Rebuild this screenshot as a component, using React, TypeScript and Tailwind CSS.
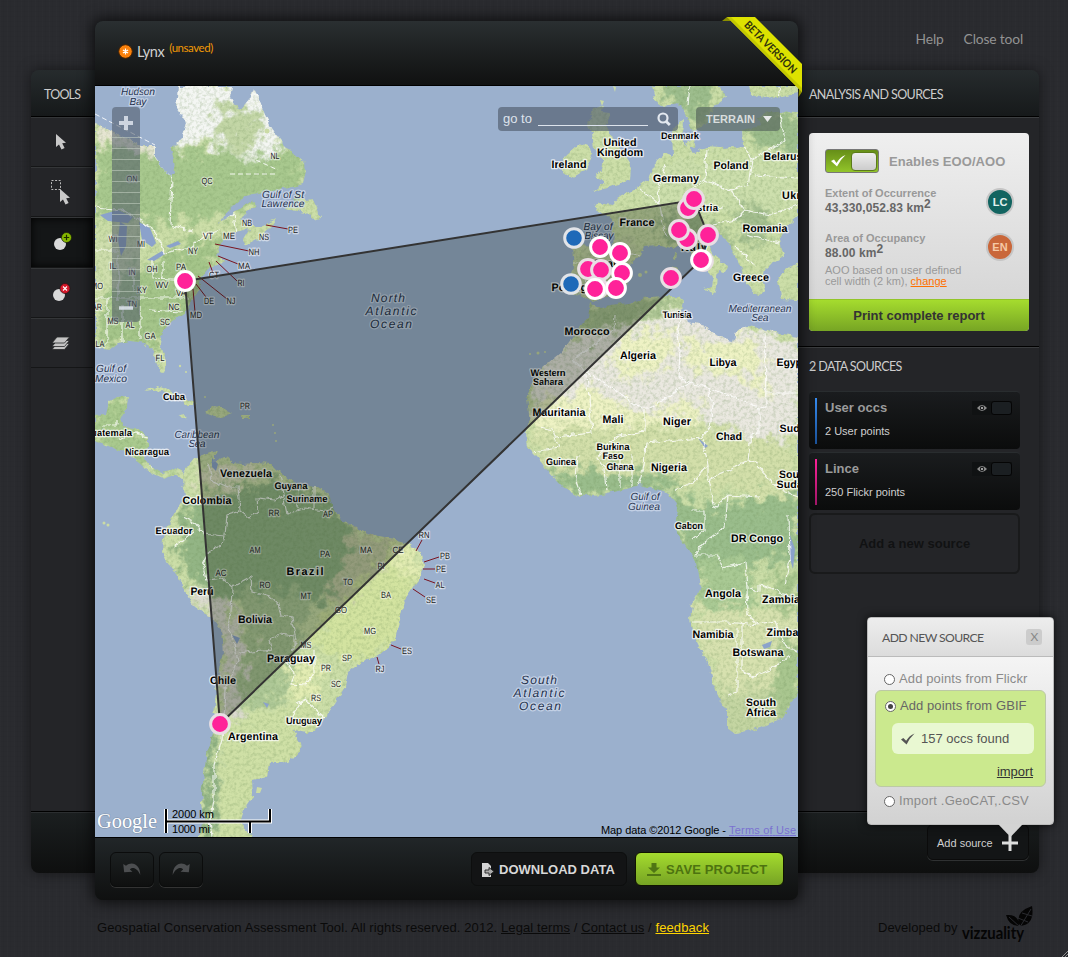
import React from "react";

const SANS = "font-['Liberation_Sans',Arial,sans-serif]";
const GEO = "font-['Lato',sans-serif]";

const LAND = [
  // North America
  "M95,123 L112,132 130,140 142,146 155,146 155,158 165,171 171,177 175,173 174,160 171,149 180,140 187,124 176,108 178,86 L232,86 230,97 240,111 250,99 254,88 258,97 263,110 270,125 280,140 292,152 305,163 306,172 303,184 290,188 270,191 252,194 240,199 230,208 220,222 230,215 240,209 253,200 257,206 250,210 241,218 246,226 252,226 262,226 275,219 270,229 257,240 246,246 243,239 249,229 240,232 229,236 221,243 217,255 224,262 208,269 201,277 199,290 191,302 184,314 173,320 163,331 160,343 167,363 165,374 159,371 153,352 145,343 130,341 118,343 109,350 95,347Z",
  "M285,209 L294,199 301,192 306,201 313,200 322,218 313,220 306,213Z",
  // Central America
  "M95,416 L106,415 109,401 118,397 128,396 127,407 121,420 122,427 135,428 148,436 148,446 143,457 152,468 163,472 175,467 183,473 195,458 207,454 217,451 212,462 227,456 232,463 243,464 255,463 272,464 283,475 295,483 315,487 328,493 333,507 342,522 362,530 378,537 395,540 408,544 422,553 424,567 420,577 413,587 404,600 400,620 395,638 386,651 374,657 362,662 348,672 345,687 335,703 325,718 314,732 306,733 293,730 300,743 301,749 292,759 283,763 270,763 268,777 252,780 253,797 244,810 240,823 250,832 251,838 L198,838 204,820 201,793 204,773 207,753 213,733 215,703 218,673 223,653 221,630 212,618 195,608 188,597 178,577 167,561 162,552 163,540 167,527 175,513 185,497 183,480 175,474 165,479 150,472 135,460 125,452 112,447 95,441Z",
  // Caribbean
  "M143,392 L158,386 167,389 178,396 192,401 197,405 185,405 178,398 162,390Z",
  "M205,413 L212,406 222,407 232,413 222,417 213,416Z",
  "M241,415 h9 v3 h-9Z",
  "M178,416 l7,-1 4,3 -8,1Z",
  // British isles
  "M587,123 L594,108 603,106 601,112 611,113 606,125 612,136 622,152 632,167 631,180 618,184 604,188 592,192 603,183 595,177 602,169 604,160 594,149 592,133Z",
  "M564,157 L579,143 590,147 592,157 587,169 572,178 563,172Z",
  // Iberia, France, central Europe
  "M572,250 L580,244 596,245 613,248 614,233 611,220 602,213 594,209 598,203 613,205 620,197 637,187 648,179 657,161 665,154 673,157 672,133 680,121 684,119 683,143 693,152 707,147 720,148 736,147 743,146 742,130 752,128 760,126 758,117 768,111 798,112 L798,217 787,226 780,240 784,257 772,263 762,273 766,291 757,295 748,284 738,262 727,240 713,227 706,231 709,244 713,255 728,267 725,273 718,270 716,287 711,287 713,277 701,263 692,255 683,241 672,248 660,245 644,246 641,255 630,264 632,277 622,291 603,298 592,302 575,293 569,289 574,266Z",
  "M704,289 l12,-3 -2,9Z M672,266 l6,2 -1,10 -5,-1Z M674,252 l3,1 -1,8 -3,-2Z",
  // Scandinavia
  "M652,86 L655,101 664,107 676,102 683,109 692,132 701,127 707,123 713,107 727,97 720,86Z M750,86 L752,94 768,99 798,93 798,86Z M685,143 l9,-4 1,7 -6,3Z",
  // Turkey
  "M778,280 L784,270 798,262 798,300 782,299Z",
  // Africa
  "M588,317 L590,303 600,308 617,305 633,302 650,297 667,296 680,296 684,302 682,310 687,322 700,324 712,331 724,339 733,341 737,329 747,326 760,328 775,332 798,337 L798,690 783,718 760,727 748,731 735,733 727,727 727,710 715,690 707,663 697,643 690,620 692,603 701,587 697,563 683,543 675,527 678,510 674,500 668,492 654,489 640,485 623,490 607,493 580,497 563,487 547,470 537,457 527,447 525,433 530,423 527,397 533,380 543,367 560,353 572,337Z",
].join(" ");

const BORDERS = [
  "M155,143 L155,158 172,178 M172,178 L170,225 193,231 M95,207 L113,209 120,208 152,228 165,253 190,247 205,235 220,230 M226,216 l8,-2 3,20 M303,178",
  "M95,298 H190 M150,310 L182,312 M107,298 V345 M122,305 V342 M140,307 V340 M152,260 V278 L190,280 M133,270 V290 M118,255 V300 M95,250 H118 M163,262 V278",
  "M208,462 L212,480 228,487 240,487 M238,487 L240,510 250,518 258,512 257,498 275,500 283,495 287,514 305,508 325,511 333,507 M280,475 L284,494 M298,484 L297,509 M314,487 L314,509 M182,517 L195,523 204,534 224,536 222,545 209,551 203,563 207,580 222,578 M225,535 L227,515 240,511 M175,545 L183,541 195,531",
  "M222,578 L232,587 251,577 252,592 270,597 278,604 281,616 292,618 297,640 292,651 M232,587 L231,612 228,625 233,640 M233,640 L238,660 225,690 222,740 214,765 214,800 210,820 212,837 M252,652 L272,650 269,640 280,634 294,636 294,648 M240,653 L252,651 M286,662 L295,674 291,684 306,685 314,672 314,651 M295,704 L305,699 325,718 M302,700 L291,720 M150,465 L153,470",
  "M103,425 h14 v-5 M117,440 L135,433 148,437",
  "M615,315 L614,330 573,360 M573,360 L590,374 641,408 M587,374 L592,433 555,437 553,430 540,427 M641,408 L650,408 690,383 679,377 680,347 677,330 682,320 M690,383 L710,388 759,408 M765,332 L766,407 759,408 759,433 751,435 748,460 758,463 M766,393 H798 M708,388 L713,405 710,427 702,438 646,443 644,465 638,487 M645,410 L645,432 618,436 606,445 598,458 605,468 607,490 M555,438 L559,448 532,452 M578,455 L576,480 580,495 M703,440 L708,465 693,482 675,490 M708,465 L708,480 714,508 M620,460 V487 M632,455 V487 M748,460 L730,470 708,480 M758,466 L780,490 798,497 M714,508 L728,495 760,497",
  "M728,495 L725,527 707,540 694,555 M690,510 h14 l0,20 -12,10 M694,555 H717 L723,568 745,562 747,588 759,592 759,584 775,590 790,596 M747,588 L748,615 758,624 M692,622 H727 L758,625 775,622 M737,627 V692 L727,695 M742,625 V670 L752,677 770,670 790,656 M775,622 L785,645 798,652 M789,515 L790,560 785,585",
  "M572,262 L590,262 585,290 M613,248 L640,255 M640,188 L660,205 662,220 M665,165 L658,190 660,205 M660,220 L668,236 M707,150 L705,180 690,190 700,205 723,208 M705,180 L730,190 748,185 752,160 743,147 M752,160 L785,140 780,115 M730,190 L745,210 770,215 798,205 M745,210 L735,220 713,225 M745,235 L780,243 M735,245 L755,265 M755,175 L798,178 M690,86 L688,104 M778,86 L782,112",
].join(" ");

type Lab = [string, number, number, number, ("b" | "s" | "w")?, number?];
// text, centre x, baseline y, width, kind (b country, s state, w water), size
const LABELS: Lab[] = [
  ["Hudson", 138, 95, 34, "w"], ["Bay", 138, 105, 17, "w"],
  ["Gulf of St", 283, 198, 42, "w"], ["Lawrence", 283, 207, 43, "w"],
  ["Gulf of", 111, 372, 30, "w"], ["Mexico", 111, 382, 32, "w"],
  ["Caribbean", 197, 438, 45, "w"], ["Sea", 197, 447, 17, "w"],
  ["Bay of", 598, 230, 29, "w"], ["Biscay", 599, 239, 29, "w"],
  ["Mediterranean", 760, 312, 63, "w"], ["Sea", 760, 321, 17, "w"],
  ["Gulf of", 645, 500, 29, "w"], ["Guinea", 644, 510, 32, "w"],
  ["North", 388, 302, 34, "w", 12], ["Atlantic", 391, 315, 51, "w", 12], ["Ocean", 391, 328, 42, "w", 12],
  ["South", 539, 684, 36, "w", 12], ["Atlantic", 539, 697, 51, "w", 12], ["Ocean", 540, 710, 42, "w", 12],
  ["ON", 132, 182, 11, "s"], ["QC", 207, 184, 11, "s"], ["NL", 275, 159, 9, "s"],
  ["NB", 247, 226, 10, "s"], ["PE", 293, 233, 10, "s"], ["NS", 264, 240, 10, "s"],
  ["VT", 208, 239, 10, "s"], ["ME", 229, 239, 12, "s"], ["NH", 254, 255, 11, "s"],
  ["NY", 193, 254, 10, "s"], ["MA", 244, 269, 12, "s"], ["WI", 113, 242, 9, "s"],
  ["MI", 141, 247, 8, "s"], ["CT", 214, 278, 10, "s"], ["RI", 241, 286, 7, "s"],
  ["PA", 181, 270, 10, "s"], ["OH", 152, 272, 11, "s"], ["IL", 113, 269, 7, "s"],
  ["IN", 132, 275, 7, "s"], ["MO", 97, 289, 12, "s"], ["WV", 162, 288, 13, "s"],
  ["VA", 181, 296, 10, "s"], ["KY", 142, 293, 10, "s"], ["DE", 209, 304, 10, "s"],
  ["NJ", 231, 304, 9, "s"], ["NC", 174, 310, 11, "s"], ["TN", 132, 307, 10, "s"],
  ["MD", 196, 318, 12, "s"], ["AR", 97, 310, 10, "s"], ["SC", 165, 325, 10, "s"],
  ["MS", 113, 324, 11, "s"], ["AL", 130, 328, 9, "s"], ["GA", 150, 339, 11, "s"],
  ["LA", 100, 347, 9, "s"], ["FL", 160, 361, 9, "s"], ["PR", 245, 409, 10, "s"],
  ["RR", 274, 516, 11, "s"], ["AP", 328, 517, 10, "s"], ["AM", 255, 553, 11, "s"],
  ["PA", 325, 557, 10, "s"], ["MA", 366, 553, 12, "s"], ["CE", 398, 553, 11, "s"],
  ["PI", 381, 569, 7, "s"], ["RN", 424, 538, 11, "s"], ["PB", 445, 559, 10, "s"],
  ["PE", 441, 572, 10, "s"], ["AL", 440, 588, 9, "s"], ["SE", 431, 603, 10, "s"],
  ["AC", 221, 576, 11, "s"], ["RO", 265, 588, 11, "s"], ["TO", 348, 585, 10, "s"],
  ["MT", 306, 599, 11, "s"], ["BA", 386, 598, 10, "s"], ["GO", 341, 613, 12, "s"],
  ["MG", 370, 634, 12, "s"], ["MS", 306, 648, 11, "s"], ["ES", 407, 654, 10, "s"],
  ["SP", 347, 661, 10, "s"], ["RJ", 380, 672, 9, "s"], ["PR", 326, 671, 10, "s"],
  ["SC", 336, 687, 10, "s"], ["RS", 316, 701, 10, "s"],
  ["Ireland", 569, 168, 35], ["United", 620, 146, 33], ["Kingdom", 620, 156, 46],
  ["Denmark", 680, 139, 38, "b", 9.5], ["Germany", 676, 182, 46], ["Poland", 731, 169, 35],
  ["Belarus", 783, 160, 39], ["Ukraine", 803, 199, 42], ["Austria", 701, 211, 34, "b", 9.5],
  ["France", 637, 226, 35], ["Romania", 765, 232, 45], ["Italy", 694, 251, 26],
  ["Spain", 608, 267, 30], ["Portugal", 574, 291, 45], ["Greece", 751, 281, 36],
  ["Tunisia", 677, 318, 29, "b", 9.5], ["Morocco", 587, 335, 45], ["Algeria", 638, 359, 36],
  ["Libya", 723, 366, 27], ["Egypt", 791, 366, 29], ["Western", 548, 376, 35, "b", 9.5],
  ["Sahara", 548, 385, 30, "b", 9.5], ["Mauritania", 559, 416, 53], ["Mali", 613, 423, 21],
  ["Niger", 677, 425, 28], ["Chad", 729, 440, 26], ["Sudan", 796, 432, 33],
  ["Burkina", 613, 450, 33, "b", 9.5], ["Faso", 613, 459, 21, "b", 9.5],
  ["Ghana", 620, 470, 27, "b", 9.5], ["Guinea", 561, 465, 30, "b", 9.5],
  ["Nigeria", 669, 471, 36], ["South", 794, 478, 30], ["Sudan", 793, 488, 33],
  ["Gabon", 689, 529, 28, "b", 9.5], ["DR Congo", 757, 542, 52], ["Angola", 723, 597, 36],
  ["Zambia", 781, 603, 38], ["Namibia", 713, 638, 41], ["Zimbabwe", 793, 636, 53],
  ["Botswana", 758, 656, 51], ["South", 761, 706, 30], ["Africa", 761, 716, 30],
  ["Cuba", 174, 400, 22, "b", 9.5], ["Guatemala", 108, 436, 48, "b", 9.5],
  ["Nicaragua", 147, 455, 44, "b", 9.5], ["Venezuela", 246, 477, 52],
  ["Guyana", 291, 489, 33, "b", 9.5], ["Suriname", 307, 502, 41, "b", 9.5],
  ["Colombia", 207, 504, 49], ["Ecuador", 174, 534, 37, "b", 9.5], ["Brazil", 305, 575, 37],
  ["Perú", 202, 595, 23], ["Bolivia", 255, 623, 34], ["Paraguay", 291, 662, 48],
  ["Chile", 223, 684, 26], ["Uruguay", 304, 724, 36, "b", 9.5], ["Argentina", 253, 740, 50],
];

const LEADS = [
  [266, 225, 288, 229], [215, 244, 249, 251], [218, 256, 238, 264], [209, 262, 213, 273], [216, 261, 237, 281],
  [198, 276, 227, 299], [196, 284, 206, 297], [193, 289, 195, 312], [422, 540, 416, 551], [424, 562, 439, 557],
  [423, 569, 435, 569], [424, 579, 435, 583], [413, 589, 425, 597], [391, 645, 401, 649], [377, 657, 379, 664],
];

const PINK = [
  [693, 200, 0], [688, 208, 1], [694, 199, 1], [687, 239, 1], [679, 230, 1], [708, 235, 1], [703, 261, 1], [701, 260, 2],
  [671, 278, 1], [600, 247, 2], [620, 253, 2], [588, 269, 1], [622, 273, 2], [601, 270, 1], [598, 288, 1], [595, 289, 2],
  [616, 288, 2], [185, 281, 2], [220, 724, 1],
];

function WorldMap() {
  return (
    <svg className="block h-[751px] w-[703px]" viewBox="95 86 703 751">
      <defs>
        <filter id="coast" x="-5%" y="-5%" width="110%" height="110%">
          <feTurbulence type="fractalNoise" baseFrequency="0.14" numOctaves="3" seed="4" />
          <feDisplacementMap in="SourceGraphic" scale="6" xChannelSelector="R" yChannelSelector="G" />
        </filter>
        <filter id="patch" x="-20%" y="-20%" width="140%" height="140%" colorInterpolationFilters="sRGB">
          <feGaussianBlur stdDeviation="3" result="b" />
          <feTurbulence type="fractalNoise" baseFrequency="0.09" numOctaves="4" seed="9" result="n" />
          <feDisplacementMap in="b" in2="n" scale="38" xChannelSelector="R" yChannelSelector="G" />
        </filter>
        <filter id="grain" x="0" y="0" width="100%" height="100%" colorInterpolationFilters="sRGB">
          <feTurbulence type="fractalNoise" baseFrequency="0.3" numOctaves="4" seed="2" />
          <feColorMatrix values="0 0 0 0 0.42  0 0 0 0 0.55  0 0 0 0 0.34  1.6 0 0 0 -0.66" />
        </filter>
        <mask id="landMask" maskUnits="userSpaceOnUse" x="95" y="86" width="703" height="751">
          <path d={LAND} fill="#fff" filter="url(#coast)" />
        </mask>
      </defs>
      <rect x="95" y="86" width="703" height="751" fill="#9bb0cd" />
      <g mask="url(#landMask)">
        <rect x="95" y="86" width="703" height="751" fill="#ccdea8" />
        <g filter="url(#patch)">
          <path fill="#a8c88e" d="M95,145 L150,150 300,150 305,195 230,215 160,225 95,215Z" />
          <path fill="#f4f6f3" d="M150,80 H262 L285,145 262,160 225,152 200,140 175,150Z" />
          <path fill="#c3d6a6" d="M216,105 L262,112 255,150 225,152Z" />
          <path fill="#e6e5d2" d="M95,118 L170,138 165,155 95,140Z" />
          <path fill="#cfdead" d="M95,232 H130 V290 H95Z" />
          <path fill="#a5c58a" d="M112,285 L190,240 225,240 185,320 160,350 95,345Z" />
          <path fill="#a9c98e" d="M95,400 H135 L150,440 185,475 95,450Z" />
          <path fill="#dfe0c2" d="M190,480 L218,462 262,466 230,490Z" />
          <path fill="#93b585" d="M190,500 L230,490 280,478 335,500 345,525 375,550 350,590 300,610 230,600 190,580 178,550Z" />
          <path fill="#adc796" d="M240,590 L310,590 300,640 285,700 235,710 250,640Z" />
          <path fill="#d3e3a0" d="M370,530 L425,550 405,640 350,665 310,640 340,590Z" />
          <path fill="#c6cca5" d="M350,530 L395,540 380,565 345,600 325,600 345,565Z" />
          <path fill="#e3ecb3" d="M395,548 h28 v28 h-30Z M290,660 h30 v40 h-30Z" />
          <path fill="#dcdad0" d="M185,590 L222,595 245,640 238,720 220,720 225,640Z" />
          <path fill="#cfe0a6" d="M225,720 L320,700 300,765 240,840 215,840Z" />
          <path fill="#8fb184" d="M203,730 L215,740 212,840 198,840Z" />
          <path fill="#9dbd8d" d="M655,80 H715 L705,125 690,120Z M725,110 L798,110 798,150 760,150Z" />
          <path fill="#cddfad" d="M640,160 H798 V210 H640Z" />
          <path fill="#a5bf90" d="M655,215 L700,212 735,245 740,275 720,240 665,240Z M735,200 L775,212 765,245 745,240Z" />
          <path fill="#c5d3a6" d="M575,245 H640 V300 H575Z" />
          <path fill="#a9c191" d="M590,305 L660,298 690,300 620,325 575,340Z" />
          <path fill="#eae8e0" d="M540,350 L625,325 680,310 800,340 800,440 760,440 690,420 600,415 530,420Z" />
          <path fill="#eef2c4" d="M615,345 L640,330 680,335 665,370 615,380Z M685,340 H760 V370 H690Z M530,410 L590,385 640,415 700,400 700,425 600,425 540,440Z M740,370 H765 V400Z" />
          <path fill="#d3dfaa" d="M525,430 L600,425 700,428 800,445 800,500 690,485 540,470Z" />
          <path fill="#9abd8c" d="M545,468 L600,470 680,475 660,495 580,498Z M670,490 L700,505 800,495 800,560 745,565 700,580 670,530Z" />
          <path fill="#a9c994" d="M700,560 L750,560 755,600 725,615 695,600Z" />
          <path fill="#d7e1af" d="M690,610 H800 V690 H720Z" />
          <path fill="#c4d5a2" d="M715,690 H800 V740 H720Z" />
          <path fill="#a9c68f" d="M780,640 H805 V710 H770Z M770,570 h30 v40 h-25Z" />
        </g>
        <rect x="95" y="86" width="703" height="751" filter="url(#grain)" opacity=".4" />
        <g fill="#8ba2cb">
          <path d="M100,215 L118,210 133,217 128,223 108,221Z M120,222 L127,226 126,246 121,256 118,240Z M139,222 L150,228 156,243 152,247 142,240Z M147,260 L162,251 165,254 154,261Z M166,246 l12,-5 3,3 -11,4Z" />
          <path d="M698,438 l10,8 -3,2Z M762,645 l10,-4 -2,6 -6,2Z M232,635 l8,3 -3,6Z M263,702 l6,2 -2,4Z M212,458 l6,6 -2,7 -4,-4Z M790,535 l5,14 -2,20 -3,-10Z" />
        </g>
        <path d={BORDERS} fill="none" stroke="#fff" strokeWidth="1.2" opacity=".8" filter="url(#coast)" />
      </g>
      <path d="M95,114 L155,145 M230,174 H278 M256,160 L278,170" stroke="#fff" strokeWidth="1" strokeDasharray="5 3" fill="none" opacity=".85" />
      <g fill="#cbdba5">
        <circle cx="180" cy="366" r="1.2" /><circle cx="186" cy="372" r="1" /><circle cx="205" cy="397" r="1" />
        <circle cx="273" cy="425" r="1" /><circle cx="275" cy="433" r="1" /><circle cx="276" cy="441" r="1" />
        <circle cx="267" cy="131" r="2.5" /><circle cx="104" cy="523" r="1.5" /><circle cx="108" cy="525" r="1.5" />
        <circle cx="545" cy="352" r="1" /><circle cx="538" cy="353" r="1.5" /><circle cx="530" cy="354" r="1" />
        <circle cx="640" cy="275" r="2" /><circle cx="646" cy="272" r="1.5" /><path d="M257,787 l5,1 -2,5 -4,0Z M613,86 l3,1 -1,5Z M600,100 l4,1 -2,5Z" />
      </g>
      <g stroke="#7a1420" strokeWidth="1">
        {LEADS.map((l, i) => <line key={i} x1={l[0]} y1={l[1]} x2={l[2]} y2={l[3]} />)}
      </g>
      <g className={SANS} textAnchor="middle" paintOrder="stroke" strokeLinejoin="round" textRendering="geometricPrecision">
        {LABELS.map(([t, x, y, w, k = "b", s], i) => (
          <text
            key={i}
            x={x}
            y={y}
            textLength={w}
            lengthAdjust={k === "s" ? "spacingAndGlyphs" : "spacing"}
            fontSize={s ?? (k === "s" ? 9 : k === "w" ? 10.3 : 10.8)}
            fontWeight={k === "b" ? 700 : 400}
            fontStyle={k === "w" ? "italic" : "normal"}
            fill={k === "b" ? "#000" : k === "s" ? "#222" : "#26324d"}
            stroke={k === "w" ? "#d5dff0" : "#fff"}
            strokeOpacity={k === "s" ? 0.5 : 0.7}
            strokeWidth={2.6}
          >
            {t}
          </text>
        ))}
      </g>
      <path d="M185,281 L694,200 708,235 701,260 220,724Z" fill="#101810" fillOpacity=".28" stroke="#333" strokeWidth="2" />
      {[[574, 238], [571, 284]].map(([x, y]) => (
        <circle key={y} cx={x} cy={y} r="9.3" fill="#1e69b8" stroke="#e2e4e8" strokeWidth="3" />
      ))}
      {PINK.map(([x, y, k], i) => (
        <circle key={i} cx={x} cy={y} r="9.4" fill="#ff2299" stroke={k === 2 ? "#fff" : "#e8dfe4"} strokeWidth="3" />
      ))}
      <text x="97" y="828" textLength="60" lengthAdjust="spacingAndGlyphs" fontSize="22" className="font-['Liberation_Serif',serif]" fill="#fff" stroke="#6f7f94" strokeWidth="1.2" strokeOpacity=".6" paintOrder="stroke">Google</text>
      <path d="M166,809 V833 M165,821.5 H270 V809 M250,821 V833" fill="none" stroke="#fff" strokeWidth="4" />
      <path d="M166,809 V833 M165,821.5 H270 V809 M250,821 V833" fill="none" stroke="#000" strokeWidth="2" />
      <g className={SANS} fontSize="11" fill="#000">
        <text x="172" y="818" textLength="42">2000 km</text>
        <text x="172" y="833" textLength="38">1000 mi</text>
        <text x="601" y="834" textLength="125">Map data ©2012 Google -</text>
        <text x="729" y="834" textLength="67" fill="#7a71d1" textDecoration="underline">Terms of Use</text>
      </g>
    </svg>
  );
}

function Cursor({ x = 0, y = 0 }: { x?: number; y?: number }) {
  return <path transform={`translate(${x} ${y})`} d="M0,0 L0,13 L3,10.4 L5.5,15.4 L8.6,14 L6.2,9.2 L10,8.8Z" fill="#c9c9c9" />;
}

const toolIcons = [
  <svg className="h-4 w-3" viewBox="0 0 12 16"><Cursor /></svg>,
  <svg className="h-[26px] w-[21px] -translate-x-[2px]" viewBox="0 0 21 26">
    <rect x="1.5" y="1.5" width="9" height="9" fill="none" stroke="#bbb" strokeDasharray="2 1.6" />
    <Cursor x={10} y={10} />
  </svg>,
  <svg className="h-5 w-[19px]" viewBox="0 0 19 20">
    <circle cx="7" cy="12" r="6" fill="#d9d9d9" />
    <circle cx="13.5" cy="5.5" r="5" fill="#86b800" stroke="#171b0b" strokeWidth=".7" />
    <path d="M13.500,2.800 v5.4 M10.800,5.500 h5.400" stroke="#1d2a00" strokeWidth="1.2" />
  </svg>,
  <svg className="h-5 w-[19px] -translate-x-px" viewBox="0 0 19 20">
    <circle cx="7" cy="12" r="6" fill="#d9d9d9" />
    <circle cx="13" cy="5.500" r="5" fill="#d5182a" stroke="#2a1214" strokeWidth=".7" />
    <path d="M11,3.500 l4,4 M15,3.500 l-4,4" stroke="#fff" strokeWidth="1.100" />
  </svg>,
  <svg className="h-[14px] w-[18px] -translate-x-px" viewBox="0 0 18 14">
    <g stroke="#27282a" strokeWidth=".8" fill="#c4c4c4">
      <path d="M0,13.500 L5,7.500 H17.500 L12.500,13.500Z" />
      <path d="M0,10.500 L5,4.500 H17.500 L12.500,10.500Z" />
      <path d="M0,7 L5,1 H17.500 L12.500,7Z" />
    </g>
  </svg>,
];

function SourceCard({ name, info, bar }: { name: string; info: string; bar: string }) {
  return (
    <div className="flex h-[58px] w-[211px] rounded border-t border-[#292d2f] bg-linear-to-b from-[#1a1c1e] to-[#0b0c0c] pt-[6px] pl-[6px]">
      <div className={`h-[46px] w-[2px] ${bar}`} />
      <div className="ml-2 flex-1 leading-[15px]">
        <div className="mt-[2px] text-[13px] font-bold text-[#9b9b9b]">{name}</div>
        <div className="mt-[9px] text-[11px] text-[#cfcfcf]">{info}</div>
      </div>
      <div className="mt-[3px] mr-2 flex h-[14px] w-10 items-center bg-[#101213]">
        <svg className="ml-[5px] h-[8px] w-[10px]" viewBox="0 0 10 8">
          <path d="M0,4 Q5,-2 10,4 Q5,10 0,4Z" fill="#8d8d8d" />
          <circle cx="5" cy="4" r="2.200" fill="#1b1c1d" />
          <circle cx="5" cy="4" r="1" fill="#ccc" />
        </svg>
        <div className="ml-[4px] h-[14px] w-[21px] rounded-[3px] border border-[#050505] bg-[#1b1f22]" />
      </div>
    </div>
  );
}

function Radio({ on }: { on?: boolean }) {
  return (
    <span className="flex size-[11px] items-center justify-center rounded-full border border-[#666] bg-white">
      {on && <span className="size-[5px] rounded-full bg-[#444]" />}
    </span>
  );
}

export default function App() {
  return (
    <div className={`relative flex h-[957px] w-[1068px] overflow-hidden bg-[#2a2b2f] bg-[repeating-linear-gradient(90deg,rgba(255,255,255,.008)_0_1px,transparent_1px_3px,rgba(0,0,0,.03)_3px_4px,transparent_4px_7px),repeating-linear-gradient(0deg,rgba(0,0,0,.025)_0_1px,transparent_1px_5px)] pl-[31px] ${SANS}`}>
      {/* Tools */}
      <aside className="mt-[70px] flex h-[803px] w-16 flex-col overflow-hidden rounded-l-lg bg-[#242528] shadow-[0_0_14px_rgba(0,0,0,.5)]">
        <div className={`flex h-[47px] items-center border-b border-black bg-linear-to-b from-[#262b2d] to-[#16191a] pt-[5px] pl-[13px] text-[12.5px] tracking-[-.8px] text-[#cdcdcd] ${GEO}`}>TOOLS</div>
        {toolIcons.map((icon, i) => (
          <div key={i} className={`flex h-[50.2px] w-[62px] items-center justify-center border-t border-b border-t-[#343638] border-b-[#151617] ${i === 2 ? "bg-[#141617] shadow-[inset_0_0_8px_#000]" : ""}`}>{icon}</div>
        ))}
        <div className="mt-auto h-[62px] border-t border-black bg-linear-to-b from-[#1b1f20] to-[#0e0f0f] shadow-[inset_0_1px_0_#2b2e30]" />
      </aside>

      {/* Map window */}
      <main className="relative z-10 mt-[21px] flex h-[879px] w-[703px] flex-col rounded-lg bg-[#131516] shadow-[0_0_14px_3px_rgba(0,0,0,.65)]">
        <header className="flex h-[65px] items-center rounded-t-lg border-b border-black bg-linear-to-b from-[#2a2f31] to-[#101111] pl-[23px]">
          <svg className="mt-[-4px] size-[15px]" viewBox="0 0 15 15">
            <circle cx="7.500" cy="7.500" r="6.800" fill="#f9810c" stroke="#4c2400" />
            <path d="M7.500,4.600 V10.400 M4.900,6 L10.100,9 M10.100,6 L4.900,9" stroke="#fff" strokeWidth="1.200" />
          </svg>
          <h1 className={`mt-[-3px] ml-[4px] text-[14.5px] tracking-[-.4px] text-[#d0d0d0] ${GEO}`}>Lynx</h1>
          <span className={`mt-[-10px] ml-[5px] text-[11.5px] tracking-[-.45px] text-[#f29a05] ${GEO}`}>(unsaved)</span>
        </header>
        <div className="relative h-[751px]">
          <WorldMap />
          <div className="absolute top-[21px] left-[17px] flex h-[215px] w-[28px] flex-col items-center rounded bg-[#4d5866]/55">
            <svg className="h-[215px] w-7" viewBox="0 0 28 215">
              <path d="M14,9 V23 M7,16 H21" stroke="#dfe5ee" strokeWidth="4" opacity=".85" />
              <path d="M7,201 H21" stroke="#dfe5ee" strokeWidth="3.500" opacity=".85" />
              <path d="M0,30.500h28M0,41.500h28M0,52.500h28M0,63.500h28M0,74.500h28M0,85.500h28M0,96.500h28M0,107.500h28M0,118.500h28M0,129.500h28M0,140.500h28M0,151.500h28M0,162.500h28M0,173.500h28M0,184.500h28" stroke="#c7d2c5" opacity=".55" />
            </svg>
          </div>
          <div className="absolute top-[21px] left-[403px] flex h-[24px] w-[180px] items-center rounded bg-[#505c6b]/65 pl-[5px] text-[13px] text-[#dde3ec]">
            go to
            <span className="mt-[13px] ml-[6px] h-px w-[110px] bg-[#dde3ec]" />
            <svg className="ml-[9px] size-[14px]" viewBox="0 0 14 14" fill="none" stroke="#e3e8ef" strokeWidth="2.200">
              <circle cx="6" cy="6" r="4.500" /><path d="M9,9.200 L12.800,13" strokeWidth="2.800" />
            </svg>
          </div>
          <div className="absolute top-[21px] left-[601px] flex h-[24px] w-[84px] items-center rounded bg-[#5b6b60]/70 pl-[10px] text-[11px] font-bold text-[#d8dddd]">
            TERRAIN
            <svg className="ml-[8px] h-[6px] w-[9px]" viewBox="0 0 9 6"><path d="M0,0 H9 L4.500,6Z" fill="#e6e9e9" /></svg>
          </div>
        </div>
        <footer className="flex h-[63px] items-center rounded-b-lg border-t border-black bg-linear-to-b from-[#212628] to-[#0f1010] pr-[14px] pl-[15px]">
          {[0, 1].map((i) => (
            <button key={i} className="mr-[5px] flex h-[35px] w-[44px] items-center justify-center rounded-md border border-[#0b0c0c] bg-linear-to-b from-[#1c2021] to-[#0f1010] shadow-[0_1px_0_#333]">
              <svg className={`h-[12px] w-[18px] ${i ? "-scale-x-100" : ""}`} viewBox="0 0 19 13">
                <path d="M0,1 L1,10 L10,9.500 L7.200,7 C10,4 15,5 18.500,13 C18.500,1 9,-2.500 3,3Z" fill="#4c4e50" />
              </svg>
            </button>
          ))}
          <button className="ml-auto flex h-[34px] w-[156px] items-center rounded-md border border-[#0d0e0e] bg-[#131415] pt-px pl-[10px] text-[13px] font-bold text-[#d8d8d8]">
            <svg className="mr-[5px] h-[14px] w-[12px]" viewBox="0 0 12 14">
              <path d="M0,0 H6 L9,3 V14 H0Z" fill="#d4d4d4" /><path d="M3,7 H7 V4.500 L12,8.500 7,12.500 V10 H3Z" fill="#aaa" stroke="#222" strokeWidth=".9" />
            </svg>
            <span className="whitespace-nowrap">DOWNLOAD DATA</span>
          </button>
          <button className="ml-2 flex h-[34px] w-[149px] items-center rounded-md border border-[#101400] bg-linear-to-b from-[#a5dc2e] to-[#76a324] pt-px pl-[11px] text-[13px] font-bold tracking-[.15px] text-[#4d7310]">
            <svg className="mr-[5px] h-[13px] w-[14px]" viewBox="0 0 14 13"><path d="M4.500,0 h5 v4.500 h3.500 L7,10 1,4.500 h3.500Z M0,11 h14 v2 H0Z" fill="#4f7614" /></svg>
            SAVE PROJECT
          </button>
        </footer>
        <svg className="absolute top-[-4px] left-[627px] h-[82px] w-[80px]" viewBox="722 17 80 82">
          <path d="M722,21 L727,17 731,21Z M799,89 L802,92 798.500,97Z" fill="#8b8e00" />
          <path d="M727,17 H755 L802,64 V92Z" fill="#dde200" />
          <path d="M727,17 L802,92 V88 L731,17Z" fill="#c3c800" />
          <text transform="translate(743.500 25.500) rotate(45)" textLength="69" lengthAdjust="spacingAndGlyphs" fontSize="11" fontWeight="700" className={GEO} fill="#30320c">BETA VERSION</text>
        </svg>
      </main>

      {/* Analysis */}
      <div className="flex w-[241px] flex-col">
        <nav className={`flex h-[70px] justify-end gap-[20px] pt-[31px] pr-4 text-[13.8px] leading-4 tracking-[-.15px] text-[#939393] ${GEO}`}>
          <a>Help</a><a>Close tool</a>
        </nav>
        <aside className="flex h-[803px] flex-col overflow-hidden rounded-r-lg bg-[#242528] shadow-[0_0_14px_rgba(0,0,0,.5)]">
          <div className={`flex h-[47px] items-center bg-linear-to-b from-[#262b2d] to-[#16191a] pt-[3px] pl-[11px] text-[12.5px] tracking-[-.6px] text-[#cdcdcd] shadow-[inset_0_-1px_0_#000,0_1px_0_#3c3e40] ${GEO}`}>ANALYSIS AND SOURCES</div>
          <section className="mt-4 ml-[11px] flex h-[198px] w-[220px] flex-col overflow-hidden rounded bg-linear-to-b from-[#efefef] to-[#d2d2d2]">
            <div className="mt-4 ml-4 flex h-[24px] items-center">
              <div className="flex h-6 w-[54px] items-center rounded-[3px] border border-[#777] bg-linear-to-b from-[#668e18] to-[#93c52a]">
                <svg className="ml-[5px] h-[12px] w-[15px]" viewBox="0 0 15 12"><path d="M0,6 L3,4.500 5.500,8 Q9,2 14.500,0 Q9,5 6,11.500Z" fill="#fff" /></svg>
                <div className="ml-[5px] h-[19px] w-[26px] rounded-sm border border-[#5b7a1a] bg-linear-to-b from-[#eee] to-[#ccc]" />
              </div>
              <span className="mt-[2px] ml-[10px] text-[13px] font-bold tracking-[.05px] text-[#999]">Enables EOO/AOO</span>
            </div>
            <div className="mt-[12px] mr-[15px] ml-4 flex h-[36px] justify-between">
              <div>
                <div className="text-[11px] leading-4 font-bold text-[#999]">Extent of Occurrence</div>
                <div className="text-[12px] leading-[15px] font-bold tracking-[.1px] text-[#666]">43,330,052.83 km<span className="relative top-[-4px]">2</span></div>
              </div>
              <div className="mt-[3px] flex size-[28px] items-center justify-center rounded-full border-2 border-[#c5c5c5] bg-[#126460] text-[11px] font-bold text-[#e3f1ef]">LC</div>
            </div>
            <div className="mt-[9px] mr-[15px] ml-4 flex h-[35px] justify-between">
              <div>
                <div className="text-[11px] leading-4 font-bold text-[#999]">Area of Occupancy</div>
                <div className="text-[12px] leading-[15px] font-bold tracking-[.1px] text-[#666]">88.00 km<span className="relative top-[-4px]">2</span></div>
              </div>
              <div className="mt-[3px] flex size-[28px] items-center justify-center rounded-full border-2 border-[#c5c5c5] bg-[#c9673a] text-[11px] font-bold text-[#f6c9a6]">EN</div>
            </div>
            <div className="ml-4 text-[11px] leading-[11px] text-[#999]">AOO based on user defined<br />cell width (2 km), <a className="text-[#ff7000] underline">change</a></div>
            <button className="mt-auto h-[32px] border-t border-[#93c52a] bg-linear-to-b from-[#a5dc2e] to-[#77a524] text-[13px] font-bold text-[#333]">Print complete report</button>
          </section>
          <div className="mt-[15px] h-[2px] border-t border-b border-black border-b-[#3a3c3e]" />
          <h2 className={`mt-[11px] ml-[11px] h-[16px] text-[12.5px] leading-4 tracking-[-.6px] text-[#cdcdcd] ${GEO}`}>2 DATA SOURCES</h2>
          <div className="mt-[16px] ml-[11px] flex flex-col gap-[3px]">
            <SourceCard name="User occs" info="2 User points" bar="bg-linear-to-b from-[#378cf0] to-[#1b5299]" />
            <SourceCard name="Lince" info="250 Flickr points" bar="bg-linear-to-b from-[#ff2299] to-[#a11768]" />
            <div className="flex h-[61px] w-[211px] items-center justify-center rounded-md border-2 border-[#191a1b] text-[13px] font-bold text-[#111213]">Add a new source</div>
          </div>
          <div className="mt-auto flex h-[62px] justify-end border-t border-black bg-linear-to-b from-[#1b1f20] to-[#0e0f0f] pt-[12px] pr-[10px] shadow-[inset_0_1px_0_#2b2e30]">
            <button className="flex h-[36px] w-[102px] items-center rounded-md border border-[#0b0b0b] bg-[#131516] pt-[2px] pl-[9px] text-[11px] text-[#cfcfcf] shadow-[0_1px_0_#2f3132]">
              Add source
              <svg className="ml-[9px] size-4" viewBox="0 0 16 16"><path d="M8,0 V16 M0,8 H16" stroke="#ddd" strokeWidth="3" /></svg>
            </button>
          </div>
        </aside>
      </div>

      {/* New source popup */}
      <div className="absolute top-[617px] left-[867px] z-20 flex h-[208px] w-[187px] flex-col rounded border border-[#bbb] bg-linear-to-b from-[#f4f4f4] from-20% to-[#d2d2d2] shadow-[0_0_10px_rgba(0,0,0,.7)]">
        <div className={`flex h-[39px] items-center justify-between rounded-t border-b border-[#bbb] bg-linear-to-b from-[#ededed] to-[#dcdcdc] pr-[11px] pl-[14px] text-[12.2px] tracking-[-.6px] text-[#555] ${GEO}`}>
          <span className="pt-[2px]">ADD NEW SOURCE</span>
          <span className="flex size-4 items-center justify-center rounded-[3px] bg-[#ccc] text-[12px] text-[#888]">X</span>
        </div>
        <div className="mt-[13px] ml-4 flex h-[18px] items-center gap-1 text-[13px] tracking-[.13px] text-[#8a8a8a]"><Radio />Add points from Flickr</div>
        <div className="mt-[2px] ml-[7px] flex h-[97px] w-[171px] flex-col rounded-md border border-[#bcc9a5] bg-[#cbe98e] text-[13px] tracking-[.08px]">
          <div className="mt-[6px] ml-[9px] flex h-[18px] items-center gap-1 text-[#666]"><Radio on />Add points from GBIF</div>
          <div className="mt-[8px] ml-4 flex h-[31px] w-[142px] items-center rounded-md bg-[#e9f8d2] pl-[9px] tracking-normal text-[#555]">
            <svg className="mr-[6px] h-[12px] w-[14px]" viewBox="0 0 15 12"><path d="M0,6.500 L2.500,5 5.500,8 Q9,2 14.500,0 Q9,5 6,12Z" fill="#555" /></svg>157 occs found
          </div>
          <a className="mt-[9px] mr-[12px] self-end leading-[18px] tracking-normal text-[#333] underline">import</a>
        </div>
        <div className="mt-[5px] ml-4 flex h-[18px] items-center gap-1 text-[13px] tracking-[.2px] text-[#8a8a8a]"><Radio />Import .GeoCAT,.CSV</div>
        <svg className="absolute top-[206px] left-[130px] h-[13px] w-[25px]" viewBox="0 0 25 13"><path d="M0,0 H25 L12.500,13Z" fill="#d3d3d3" /></svg>
      </div>

      <div className="absolute top-[919px] left-[97px] text-[13px] leading-[18px] tracking-[.1px] whitespace-nowrap text-[#0a0a0a]">
        Geospatial Conservation Assessment Tool. All rights reserved. 2012. <a className="underline">Legal terms</a> / <a className="underline">Contact us</a> / <a className="text-[#ffd400] underline">feedback</a>
      </div>
      <div className="absolute top-[904px] left-[878px] flex h-[42px] items-center text-[13px] text-[#0a0a0a]">
        <span className="mt-[5px]">Developed by</span>
        <svg className="ml-[3px] h-[42px] w-[74px]" viewBox="0 0 74 42">
          <text x="1" y="35" textLength="62" lengthAdjust="spacingAndGlyphs" fontSize="17" fontWeight="700" className={GEO} fill="#050505">vizzuality</text>
          <path d="M45,11 Q58,10 58,22 Q48,22 45,11Z M58,20 Q54,8 71,2 Q74,20 60,22Z" fill="#050505" />
          <path d="M48,13 L60,24 M70,5 L59,23 M57,14 L67,18 M61,9 L71,12" stroke="#2a2b30" strokeWidth="1" />
        </svg>
      </div>
      <svg className="absolute right-0 bottom-0 size-[6px]" viewBox="0 0 6 6"><path d="M0,6 L6,0 M3,6 L6,3" stroke="#aaa" strokeWidth=".8" /></svg>
    </div>
  );
}
